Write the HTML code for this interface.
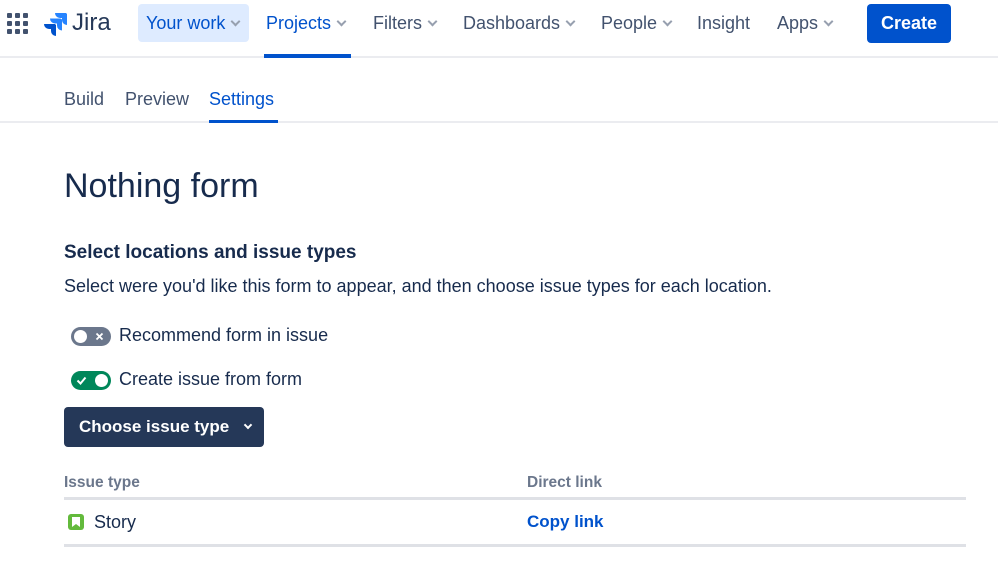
<!DOCTYPE html>
<html><head><style>
*{margin:0;padding:0;box-sizing:border-box}
body{width:998px;height:572px;background:#fff;font-family:"Liberation Sans",sans-serif;color:#172B4D;position:relative;overflow:hidden}
.a{position:absolute;white-space:nowrap}
.nav{font-size:18px;color:#42526E;top:13px}
.chev{display:inline-block;width:7px;height:7px;border-right:2px solid #97A0AF;border-bottom:2px solid #97A0AF;transform:rotate(45deg);margin-left:7px;position:relative;top:-4px}
</style></head><body>
<div class="a" style="left:0;top:0;width:998px;height:58px;border-bottom:2px solid #EBECF0"></div>
<svg class="a" style="left:7px;top:13px" width="22" height="22" viewBox="0 0 22 22" fill="#42526E">
<rect x="0" y="0" width="5" height="5" rx="1"/><rect x="8" y="0" width="5" height="5" rx="1"/><rect x="16" y="0" width="5" height="5" rx="1"/>
<rect x="0" y="8" width="5" height="5" rx="1"/><rect x="8" y="8" width="5" height="5" rx="1"/><rect x="16" y="8" width="5" height="5" rx="1"/>
<rect x="0" y="16" width="5" height="5" rx="1"/><rect x="8" y="16" width="5" height="5" rx="1"/><rect x="16" y="16" width="5" height="5" rx="1"/></svg>
<svg class="a" style="left:44px;top:12px" width="24" height="24" viewBox="0 0 24 24">
<path d="M22 1H11a5 5 0 0 0 5 5h2v2a5 5 0 0 0 5 5V2z" fill="#2684FF"/>
<path d="M16.5 6.5H6a5 5 0 0 0 5 5h2v2a5 5 0 0 0 5 5V7.5z" fill="#2684FF"/>
<path d="M11 12H0a5 5 0 0 0 5 5h2v2a5 5 0 0 0 5 5V13z" fill="#0052CC"/></svg>
<div class="a" style="left:72px;top:9px;font-size:24px;color:#253858">Jira</div>
<div class="a" style="left:138px;top:4px;width:111px;height:38px;background:#DEEBFF;border-radius:4px"></div>
<div class="a nav" style="left:146px;color:#0052CC">Your work<span class="chev"></span></div>
<div class="a nav" style="left:266px;color:#0052CC">Projects<span class="chev"></span></div>
<div class="a" style="left:264px;top:54px;width:87px;height:4px;background:#0052CC"></div>
<div class="a nav" style="left:373px">Filters<span class="chev"></span></div>
<div class="a nav" style="left:463px">Dashboards<span class="chev"></span></div>
<div class="a nav" style="left:601px">People<span class="chev"></span></div>
<div class="a nav" style="left:697px">Insight</div>
<div class="a nav" style="left:777px">Apps<span class="chev"></span></div>
<div class="a" style="left:867px;top:4px;width:84px;height:39px;background:#0052CC;border-radius:4px;color:#fff;font-size:18px;font-weight:bold;text-align:center;line-height:39px">Create</div>

<div class="a" style="left:0;top:121px;width:998px;height:2px;background:#EBECF0"></div>
<div class="a" style="left:64px;top:89px;font-size:18px;color:#42526E">Build</div>
<div class="a" style="left:125px;top:89px;font-size:18px;color:#42526E">Preview</div>
<div class="a" style="left:209px;top:89px;font-size:18px;color:#0052CC">Settings</div>
<div class="a" style="left:209px;top:120px;width:69px;height:3px;background:#0052CC"></div>

<div class="a" style="left:64px;top:167px;font-size:34px;color:#172B4D">Nothing form</div>
<div class="a" style="left:64px;top:242px;font-size:19px;font-weight:bold">Select locations and issue types</div>
<div class="a" style="left:64px;top:276px;font-size:18px">Select were you'd like this form to appear, and then choose issue types for each location.</div>

<div class="a" style="left:71px;top:327px;width:40px;height:19px;border-radius:10px;background:#6B778C"></div>
<div class="a" style="left:74px;top:330px;width:13px;height:13px;border-radius:50%;background:#fff"></div>
<svg class="a" style="left:95px;top:332px" width="9" height="9" viewBox="0 0 9 9"><path d="M1.5 1.5l6 6M7.5 1.5l-6 6" stroke="#fff" stroke-width="1.8"/></svg>
<div class="a" style="left:119px;top:325px;font-size:18px">Recommend form in issue</div>

<div class="a" style="left:71px;top:371px;width:40px;height:19px;border-radius:10px;background:#00875A"></div>
<div class="a" style="left:95px;top:374px;width:13px;height:13px;border-radius:50%;background:#fff"></div>
<svg class="a" style="left:76px;top:376px" width="11" height="9" viewBox="0 0 11 9"><path d="M1.5 4.5l3 3 5-6" stroke="#fff" stroke-width="2" fill="none"/></svg>
<div class="a" style="left:119px;top:369px;font-size:18px">Create issue from form</div>

<div class="a" style="left:64px;top:407px;width:200px;height:40px;background:#253858;border-radius:4px"></div>
<div class="a" style="left:79px;top:417px;font-size:17px;font-weight:bold;color:#fff">Choose issue type</div>
<div class="a" style="left:245px;top:422px;width:6px;height:6px;border-right:2px solid #fff;border-bottom:2px solid #fff;transform:rotate(45deg)"></div>

<div class="a" style="left:64px;top:474px;font-size:15.5px;font-weight:bold;color:#6B778C">Issue type</div>
<div class="a" style="left:527px;top:474px;font-size:15.5px;font-weight:bold;color:#6B778C">Direct link</div>
<div class="a" style="left:64px;top:497px;width:902px;height:3px;background:#DFE1E6"></div>
<div class="a" style="left:68px;top:514px;width:16px;height:16px;border-radius:3px;background:#63BA3C"></div>
<svg class="a" style="left:72px;top:517px" width="8" height="10" viewBox="0 0 8 10"><path d="M0 0h8v10L4 7 0 10z" fill="#fff"/></svg>
<div class="a" style="left:94px;top:512px;font-size:18px">Story</div>
<div class="a" style="left:527px;top:512px;font-size:17px;font-weight:bold;color:#0052CC">Copy link</div>
<div class="a" style="left:64px;top:544px;width:902px;height:3px;background:#DFE1E6"></div>
</body></html>
